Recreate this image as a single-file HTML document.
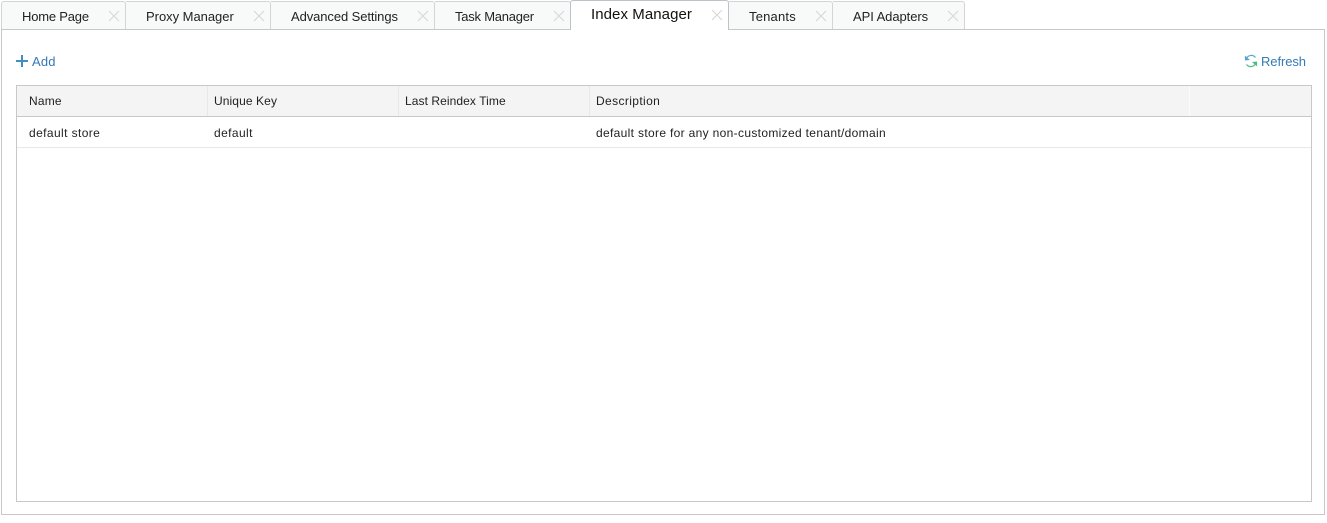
<!DOCTYPE html>
<html><head><meta charset="utf-8"><style>
html,body{margin:0;padding:0;background:#fff;width:1327px;height:523px;overflow:hidden}
body{position:relative;font-family:"Liberation Sans",sans-serif;font-size:12px;color:#222}
div,span,svg{position:absolute;box-sizing:border-box}
.t{white-space:nowrap;line-height:16px;height:16px}
.tab{top:1px;height:28px;background:#f8f9f9;border:1px solid #d4d4d4;border-left:0;border-bottom:0;border-radius:0 3px 0 0}
.act{top:0;height:30px;background:#fff;border:1px solid #bcc3c8;border-bottom:0;border-radius:3px 3px 0 0}
.x{width:12px;height:12px}
</style></head><body>
<div class="tab" style="left:1px;width:125px;border-left:1px solid #d4d4d4;border-radius:3px 3px 0 0"></div>
<div class="tab" style="left:126px;width:145px"></div>
<div class="tab" style="left:271px;width:164px"></div>
<div class="tab" style="left:435px;width:136px"></div>
<div class="tab" style="left:729px;width:104px"></div>
<div class="tab" style="left:833px;width:132px"></div>
<div style="left:1px;top:29px;width:1324px;height:486px;border:1px solid #c8c8c8;background:#fff"></div>
<div class="act" style="left:570px;width:159px"></div>
<span class="t" style="left:22px;top:9px;font-size:13px;letter-spacing:-.2px">Home Page</span>
<span class="t" style="left:146px;top:9px;font-size:13px;letter-spacing:-.03px">Proxy Manager</span>
<span class="t" style="left:291px;top:9px;font-size:13px;letter-spacing:-.09px">Advanced Settings</span>
<span class="t" style="left:455px;top:9px;font-size:13px;letter-spacing:-.23px">Task Manager</span>
<span class="t" style="left:591px;top:7px;font-size:15px;letter-spacing:.07px;color:#111">Index Manager</span>
<span class="t" style="left:749px;top:9px;font-size:13px;letter-spacing:.2px">Tenants</span>
<span class="t" style="left:853px;top:9px;font-size:13px;letter-spacing:-.07px">API Adapters</span>
<svg class="x" style="left:108px;top:10px" viewBox="0 0 12 12"><path d="M1 1L11 11M11 1L1 11" stroke="#d6d6d6" fill="none"/></svg>
<svg class="x" style="left:253px;top:10px" viewBox="0 0 12 12"><path d="M1 1L11 11M11 1L1 11" stroke="#d6d6d6" fill="none"/></svg>
<svg class="x" style="left:417px;top:10px" viewBox="0 0 12 12"><path d="M1 1L11 11M11 1L1 11" stroke="#d6d6d6" fill="none"/></svg>
<svg class="x" style="left:553px;top:10px" viewBox="0 0 12 12"><path d="M1 1L11 11M11 1L1 11" stroke="#d6d6d6" fill="none"/></svg>
<svg class="x" style="left:711px;top:9px" viewBox="0 0 12 12"><path d="M1 1L11 11M11 1L1 11" stroke="#d6d6d6" fill="none"/></svg>
<svg class="x" style="left:815px;top:10px" viewBox="0 0 12 12"><path d="M1 1L11 11M11 1L1 11" stroke="#d6d6d6" fill="none"/></svg>
<svg class="x" style="left:947px;top:10px" viewBox="0 0 12 12"><path d="M1 1L11 11M11 1L1 11" stroke="#d6d6d6" fill="none"/></svg>

<svg style="left:16px;top:55px;width:12px;height:12px" viewBox="0 0 12 12"><path d="M0 6H12M6 0V12" stroke="#3f8fc0" stroke-width="2" fill="none"/></svg>
<span class="t" style="left:32px;top:54px;font-size:13px;color:#337ab7;letter-spacing:.15px">Add</span>
<svg style="left:1244px;top:54px;width:14px;height:14px" viewBox="0 0 14 14"><path d="M2 5.5A5.4 5.4 0 0 1 11.5 3.5" stroke="#5aa5d0" stroke-width="1.2" fill="none"/><path d="M0.8 1.5L1 6.5L6 6Z" fill="#5aa5d0"/><path d="M12 8.5A5.4 5.4 0 0 1 2.5 10.5" stroke="#45bd85" stroke-width="1.2" fill="none"/><path d="M13.2 12.5L13 7.5L8 8Z" fill="#45bd85"/></svg>
<span class="t" style="left:1261px;top:54px;font-size:13px;color:#337ab7;letter-spacing:-.08px">Refresh</span>

<div style="left:16px;top:85px;width:1296px;height:417px;border:1px solid #c8c8c8;background:#fff"></div>
<div style="left:17px;top:86px;width:1294px;height:31px;background:#f4f4f4;border-bottom:1px solid #c8c8c8"></div>
<div style="left:207px;top:86px;width:1px;height:30px;background:#e8e8e8"></div>
<div style="left:398px;top:86px;width:1px;height:30px;background:#e8e8e8"></div>
<div style="left:589px;top:86px;width:1px;height:30px;background:#e8e8e8"></div>
<div style="left:1189px;top:86px;width:1px;height:30px;background:#fbfbfb"></div>
<div style="left:17px;top:147px;width:1294px;height:1px;background:#e8e8e8"></div>
<span class="t" style="left:29px;top:93px;letter-spacing:.2px">Name</span>
<span class="t" style="left:214px;top:93px;letter-spacing:.1px">Unique Key</span>
<span class="t" style="left:405px;top:93px;letter-spacing:.08px">Last Reindex Time</span>
<span class="t" style="left:596px;top:93px;letter-spacing:.38px">Description</span>
<span class="t" style="left:29px;top:125px;letter-spacing:.4px">default store</span>
<span class="t" style="left:214px;top:125px;letter-spacing:.4px">default</span>
<span class="t" style="left:596px;top:125px;letter-spacing:.33px">default store for any non-customized tenant/domain</span>
</body></html>
